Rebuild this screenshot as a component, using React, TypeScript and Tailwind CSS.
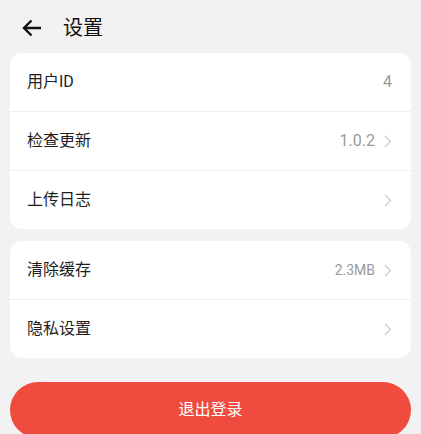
const rows1 = [
  { label: '用户ID', value: '4', arrow: false },
  { label: '检查更新', value: '1.0.2', arrow: true },
  { label: '上传日志', value: '', arrow: true },
];

const rows2 = [
  { label: '清除缓存', value: '2.3MB', arrow: true, small: true },
  { label: '隐私设置', value: '', arrow: true },
];

type Row = { label: string; value: string; arrow: boolean; small?: boolean };

function Chevron() {
  return (
    <svg width="8" height="13" viewBox="0 0 8 13" fill="none" className="ml-[9px]">
      <path d="M1 1l5.5 5.5L1 12" stroke="#c8c8c8" strokeWidth="1.1" />
    </svg>
  );
}

function Card({ rows }: { rows: Row[] }) {
  return (
    <div className="bg-white rounded-xl overflow-hidden">
      {rows.map((r, i) => (
        <div
          key={r.label}
          className={`flex items-center pl-[17px] pr-[19px] ${i > 0 ? 'h-[59px] border-t border-[#eeeeee]' : 'h-[58px]'}`}
        >
          <span className="text-[16px] text-[#1e1e1e]">{r.label}</span>
          <span className="ml-auto flex items-center">
            {r.value && (
              <span className={`${r.small ? 'text-[14px]' : 'text-[16px]'} text-[#9a9a9a]`}>{r.value}</span>
            )}
            {r.arrow && <Chevron />}
          </span>
        </div>
      ))}
    </div>
  );
}

export default function App() {
  return (
    <div
      className="w-[421px] h-[434px] overflow-hidden bg-[#f2f2f2]"
      style={{ fontFamily: 'Roboto, "Noto Sans CJK SC", sans-serif' }}
    >
      <div className="flex items-center h-[53px] pl-[22px] pt-[3px]">
        <svg width="20" height="18" viewBox="0 0 20 18" fill="none">
          <path d="M19 9H2M9.5 1.5L2 9l7.5 7.5" stroke="#111" strokeWidth="2.4" />
        </svg>
        <span className="ml-[21px] text-[20px] text-[#111]">设置</span>
      </div>
      <div className="px-[10px] flex flex-col gap-[12px]">
        <Card rows={rows1} />
        <Card rows={rows2} />
        <button className="mt-[12px] h-[56px] rounded-full bg-[#ef4b3e] text-white text-[16px]">
          退出登录
        </button>
      </div>
    </div>
  );
}
